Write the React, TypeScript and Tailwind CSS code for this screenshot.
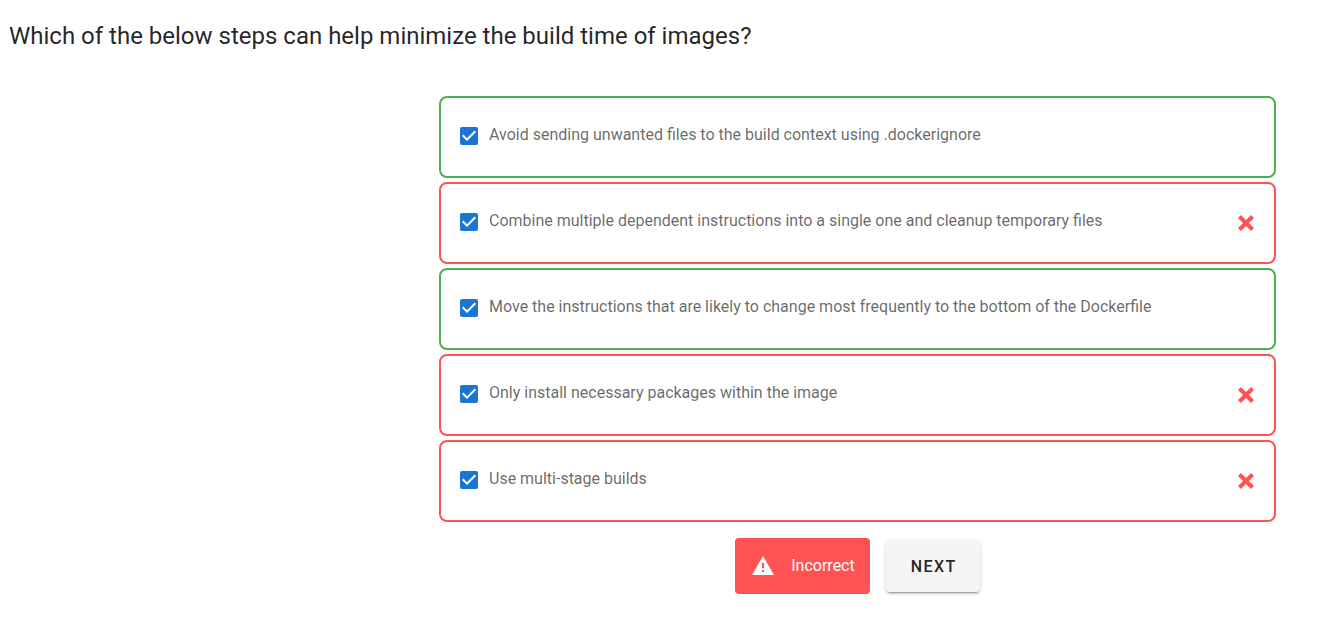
import { useState } from "react";

type Option = { id: string; text: string; correct: boolean };

const options: Option[] = [
  { id: "dockerignore", text: "Avoid sending unwanted files to the build context using .dockerignore", correct: true },
  { id: "combine", text: "Combine multiple dependent instructions into a single one and cleanup temporary files", correct: false },
  { id: "order", text: "Move the instructions that are likely to change most frequently to the bottom of the Dockerfile", correct: true },
  { id: "packages", text: "Only install necessary packages within the image", correct: false },
  { id: "multistage", text: "Use multi-stage builds", correct: false },
];

function Checkbox({ id }: { id: string }) {
  const [checked, setChecked] = useState(true);
  return (
    <span className="mb-0.5 grid size-[18px] shrink-0">
      <input
        id={id}
        type="checkbox"
        checked={checked}
        onChange={(e) => setChecked(e.target.checked)}
        className="peer col-start-1 row-start-1 size-[18px] appearance-none rounded-xs border-2 border-[#757575] checked:border-[#1976d2] checked:bg-[#1976d2]"
      />
      <svg
        viewBox="3 3 18 18"
        aria-hidden="true"
        className="pointer-events-none col-start-1 row-start-1 hidden size-[18px] fill-white peer-checked:block"
      >
        <path d="M10 17L5 12L6.41 10.59L10 14.17L17.59 6.58L19 8L10 17Z" />
      </svg>
    </span>
  );
}

function OptionCard({ option }: { option: Option }) {
  return (
    <li
      className={`flex min-h-[82px] items-center rounded-lg border-2 pr-4 pl-[19px] ${
        option.correct ? "border-[#4caf50]" : "border-[#ff5252]"
      }`}
    >
      <Checkbox id={option.id} />
      <label htmlFor={option.id} className="grow pb-1 pl-[11px] text-base leading-5 text-black/60">
        {option.text}
      </label>
      {!option.correct && (
        <svg viewBox="0 0 24 24" aria-hidden="true" className="size-6 shrink-0 fill-[#ff5252]">
          <path d="M20 6.91L17.09 4L12 9.09L6.91 4L4 6.91L9.09 12L4 17.09L6.91 20L12 14.91L17.09 20L20 17.09L14.91 12L20 6.91Z" />
        </svg>
      )}
    </li>
  );
}

export default function App() {
  return (
    <main className="bg-white pb-7 font-[Roboto,sans-serif] text-black/87">
      <h1 className="px-[9px] pt-5 text-2xl leading-8">
        Which of the below steps can help minimize the build time of images?
      </h1>
      <section className="mt-11 pr-14 pl-[calc(50%-227px)]">
        <ul className="flex flex-col gap-1">
          {options.map((option) => (
            <OptionCard key={option.id} option={option} />
          ))}
        </ul>
        <div className="mt-4 flex items-center justify-center gap-4">
          <div role="alert" className="flex h-14 items-center gap-4 rounded-sm bg-[#ff5252] pr-[15px] pl-4 text-base text-white">
            <svg viewBox="0 0 24 24" aria-hidden="true" className="size-6 shrink-0 fill-white">
              <path d="M13 14H11V9H13M13 18H11V16H13M1 21H23L12 2L1 21Z" />
            </svg>
            <span>Incorrect</span>
          </div>
          <button
            type="button"
            className="h-[52px] rounded-sm bg-[#f5f5f5] pt-0.5 pr-[23px] pl-[25px] text-base font-medium tracking-[0.09em] shadow-[0_3px_1px_-2px_rgba(0,0,0,0.2),0_2px_2px_0_rgba(0,0,0,0.14),0_1px_5px_0_rgba(0,0,0,0.12)]"
          >
            NEXT
          </button>
        </div>
      </section>
    </main>
  );
}
